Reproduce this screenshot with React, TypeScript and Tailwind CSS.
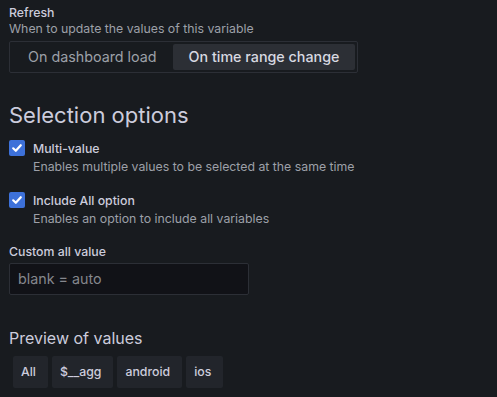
import React from 'react';

const FONT = { fontFamily: 'Inter, "Noto Sans", sans-serif' };

function CheckRow({ label, desc }: { label: string; desc: string }) {
  return (
    <div className="flex items-start gap-2">
      <div className="mt-[-1px] flex h-4 w-4 items-center justify-center rounded-[2px] bg-[#3d71d9]">
        <svg width="12" height="12" viewBox="0 0 12 12" fill="none">
          <path d="M2.2 6.3 L4.8 8.8 L9.8 3.2" stroke="#fff" strokeWidth="2.2" strokeLinecap="round" strokeLinejoin="round" />
        </svg>
      </div>
      <div className="flex flex-col">
        <span className="text-[12.3px] leading-[15px] font-medium text-[#ccccdc]">{label}</span>
        <span className="mt-[3px] text-[12.3px] leading-[15px] text-[#9da0a8]">{desc}</span>
      </div>
    </div>
  );
}

export default function App() {
  const chips = ['All', '$__agg', 'android', 'ios'];
  return (
    <div style={FONT} className="w-[497px] h-[397px] overflow-hidden bg-[#181b1f] pl-[9px] pt-[5px]">
      <div className="flex flex-col">
        <span className="text-[12.3px] leading-[15px] font-medium text-[#ccccdc]">Refresh</span>
        <span className="mt-[1px] text-[12.3px] leading-[15px] text-[#9da0a8]">When to update the values of this variable</span>

        <div className="mt-[5px] flex h-8 w-fit items-stretch rounded-[2px] border border-[#2c2f36] p-[2px]">
          <button className="px-4 text-[14.3px] text-[#9da0a8]">On dashboard load</button>
          <button className="rounded-[2px] bg-[#2c2f35] px-4 text-[14.3px] font-medium text-[#d8d9e1]">On time range change</button>
        </div>

        <h3 className="mt-[28px] text-[22px] leading-[28px] font-normal text-[#ccccdc]">Selection options</h3>

        <div className="mt-[12px]">
          <CheckRow label="Multi-value" desc="Enables multiple values to be selected at the same time" />
        </div>
        <div className="mt-[19px]">
          <CheckRow label="Include All option" desc="Enables an option to include all variables" />
        </div>

        <span className="mt-[18px] text-[12.3px] leading-[15px] font-medium text-[#ccccdc]">Custom all value</span>
        <div className="mt-[4px] flex h-8 w-[240px] items-center rounded-[2px] border border-[#2c2f36] bg-[#111217] px-2">
          <span className="text-[14.3px] text-[#85878d]">blank = auto</span>
        </div>

        <h4 className="mt-[33px] text-[16px] leading-[20px] font-normal text-[#ccccdc]">Preview of values</h4>
        <div className="mt-[8px] ml-[4px] flex gap-1">
          {chips.map((c) => (
            <div key={c} className="flex h-8 items-center rounded-[2px] bg-[#22252b] pl-2 pr-3 text-[12.3px] font-medium text-[#ccccdc]">
              {c}
            </div>
          ))}
        </div>
      </div>
    </div>
  );
}
